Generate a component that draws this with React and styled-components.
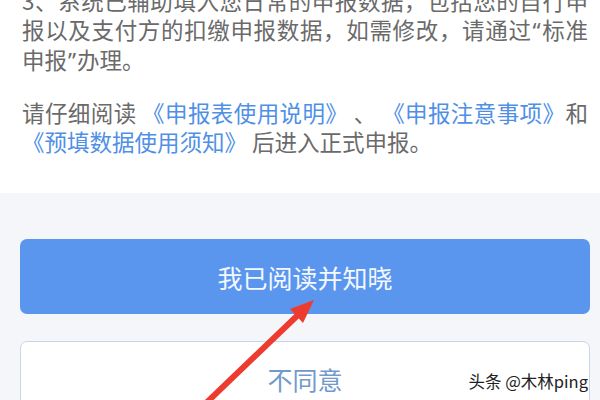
import styled, { createGlobalStyle } from "styled-components";

const GlobalStyle = createGlobalStyle`
  html, body {
    margin: 0;
    padding: 0;
    background: #f5f6f9;
  }
  body {
    font-family: "Noto Sans CJK SC", "Noto Sans", sans-serif;
  }
`;

const Screen = styled.div`
  position: relative;
  width: 600px;
  height: 400px;
  overflow: hidden;
  background: #f5f6f9;
`;

const Notice = styled.section`
  background: #fff;
  margin-top: -14px;
  padding: 0 12px 37px 22px;
  display: flex;
  flex-direction: column;
  gap: 23px;
`;

const Para = styled.div`
  font-size: 22.5px;
  line-height: 29px;
  color: #6a6a6a;
`;

const Line = styled.div`
  white-space: nowrap;
  text-align: ${(p) => (p.$fill ? "justify" : "left")};
  text-align-last: ${(p) => (p.$fill ? "justify" : "left")};
`;

const Link = styled.span`
  color: #4f8fe6;
`;

// western-width curly quotes, as on the phone
const Quote = styled.span`
  font-family: "Noto Sans", sans-serif;
  margin: 0 1px;
`;

const Actions = styled.div`
  padding: 46px 10px 0 20px;
  display: flex;
  flex-direction: column;
  gap: 27px;
`;

const Button = styled.button`
  height: 75px;
  border-radius: 7px;
  font-family: inherit;
  font-size: 25px;
  cursor: pointer;
  background: ${(p) => (p.$primary ? "#5b96ee" : "#fff")};
  color: ${(p) => (p.$primary ? "#f4f8ff" : "#7199cc")};
  border: ${(p) => (p.$primary ? "none" : "1.5px solid #c9d5e8")};
`;

const Arrow = styled.svg`
  position: absolute;
  left: 0;
  top: 0;
  pointer-events: none;
`;

const Watermark = styled.div`
  position: absolute;
  right: 12px;
  top: 369px;
  font-size: 16.5px;
  color: #222;
  text-shadow: 0 0 2px #fff, 0 0 2px #fff;
`;

export default function App() {
  return (
    <Screen>
      <GlobalStyle />
      <Notice>
        <Para>
          <Line $fill>3、系统已辅助填入您日常的申报数据，包括您的自行申</Line>
          <Line $fill>
            报以及支付方的扣缴申报数据，如需修改，请通过<Quote>“</Quote>标准
          </Line>
          <Line>
            申报<Quote>”</Quote>办理。
          </Line>
        </Para>
        <Para>
          <Line $fill>
            请仔细阅读 <Link>《申报表使用说明》</Link> 、 <Link>《申报注意事项》</Link>和
          </Line>
          <Line>
            <Link>《预填数据使用须知》</Link> 后进入正式申报。
          </Line>
        </Para>
      </Notice>
      <Actions>
        <Button $primary>我已阅读并知晓</Button>
        <Button>不同意</Button>
      </Actions>
      <Arrow width="600" height="400" viewBox="0 0 600 400">
        <line x1="203" y1="406" x2="299" y2="314" stroke="#ee3b2f" strokeWidth="6" />
        <polygon points="314,300 303,323 290,309" fill="#ee3b2f" />
      </Arrow>
      <Watermark>头条 @木林ping</Watermark>
    </Screen>
  );
}
